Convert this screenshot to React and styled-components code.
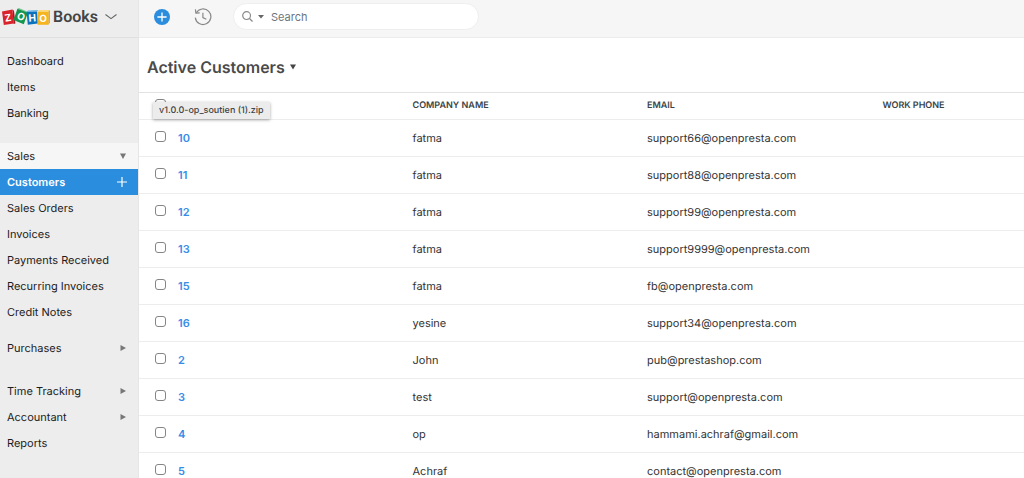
import React from 'react';
import styled, { createGlobalStyle } from 'styled-components';

const openGroup = [
  { label: 'Customers', active: true },
  { label: 'Sales Orders' },
  { label: 'Invoices' },
  { label: 'Payments Received' },
  { label: 'Recurring Invoices' },
  { label: 'Credit Notes' },
];

const customers = [
  { name: '10', company: 'fatma', email: 'support66@openpresta.com' },
  { name: '11', company: 'fatma', email: 'support88@openpresta.com' },
  { name: '12', company: 'fatma', email: 'support99@openpresta.com' },
  { name: '13', company: 'fatma', email: 'support9999@openpresta.com' },
  { name: '15', company: 'fatma', email: 'fb@openpresta.com' },
  { name: '16', company: 'yesine', email: 'support34@openpresta.com' },
  { name: '2', company: 'John', email: 'pub@prestashop.com' },
  { name: '3', company: 'test', email: 'support@openpresta.com' },
  { name: '4', company: 'op', email: 'hammami.achraf@gmail.com' },
  { name: '5', company: 'Achraf', email: 'contact@openpresta.com' },
];

const ZohoLogo = () => (
  <svg width="48" height="18" viewBox="0 0 48 18" aria-hidden="true">
    <path d="M10.4 1.6l1.6 1.2 1.4 12.8-1.8.4z" fill="#a8141f" />
    <path d="M0 3.4l10.4-1.8 1.4 14L1.8 17z" fill="#d8232d" />
    <path d="M15.4.8l1.4-.8 9.8 4-.8 1.4z" fill="#7cc79a" />
    <path d="M15.4.8l10.4 4-4 11.4L11.4 12z" fill="#15954d" />
    <path d="M24.6 4l1.2-1.4 10.4-.6-1.2 1.4z" fill="#6db4e6" />
    <path d="M24.6 4l10.4-.6.8 12.2-10 1.2z" fill="#0b73bd" />
    <path d="M35.6 3.8L37 2h10.8l-1.4 1.8z" fill="#fbd873" />
    <path d="M46.4 3.8L47.8 2v12.8l-1.4 2z" fill="#d99a12" />
    <path d="M35.6 3.8h10.8v13H35.6z" fill="#f6b51e" />
    <LogoLetter x="6" y="13.4" transform="rotate(-9 6 10)">Z</LogoLetter>
    <LogoLetter x="18.8" y="12" transform="rotate(20 18.8 9)">O</LogoLetter>
    <LogoLetter x="30.2" y="13.6" transform="rotate(-4 30 10)">H</LogoLetter>
    <LogoLetter x="41" y="13.8">O</LogoLetter>
  </svg>
);

const Arrow = ({ down }) => (
  <svg width="8" height="8" viewBox="0 0 8 8" fill="#777" aria-hidden="true">
    <path d={down ? 'M1 1.5h6L4 7z' : 'M1.5 1L7 4 1.5 7z'} />
  </svg>
);

const App = () => (
  <>
    <GlobalStyle />
    <Page>
      <Sidebar>
        <Brand>
          <ZohoLogo />
          <BrandName>Books</BrandName>
          <BrandToggle aria-label="Switch app">
            <svg width="14" height="8" viewBox="0 0 14 8" fill="none" stroke="#666" strokeWidth="1.1">
              <path d="M1.5 1.5L7 5.6l5.5-4.1" />
            </svg>
          </BrandToggle>
        </Brand>
        <Nav>
          <NavGroup>
            <NavItem href="#dashboard">Dashboard</NavItem>
            <NavItem href="#items">Items</NavItem>
            <NavItem href="#banking">Banking</NavItem>
          </NavGroup>
          <NavGroup>
            <NavItem href="#sales" $open>
              Sales
              <Arrow down />
            </NavItem>
            {openGroup.map((item) => (
              <NavItem key={item.label} href="#sales" $active={item.active}>
                {item.label}
                {item.active && (
                  <svg width="10" height="10" viewBox="0 0 10 10" stroke="#fff" strokeWidth="1.2" aria-hidden="true">
                    <path d="M5 0v10M0 5h10" />
                  </svg>
                )}
              </NavItem>
            ))}
          </NavGroup>
          <NavGroup>
            <NavItem href="#purchases">
              Purchases
              <Arrow />
            </NavItem>
          </NavGroup>
          <NavGroup>
            <NavItem href="#time">
              Time Tracking
              <Arrow />
            </NavItem>
            <NavItem href="#accountant">
              Accountant
              <Arrow />
            </NavItem>
            <NavItem href="#reports">Reports</NavItem>
          </NavGroup>
        </Nav>
      </Sidebar>
      <Main>
        <TopBar>
          <IconButton aria-label="Quick create">
            <svg width="16" height="16" viewBox="0 0 16 16">
              <circle cx="8" cy="8" r="8" fill="#2b8ddd" />
              <path d="M8 3.4v9.2M3.4 8h9.2" stroke="#fff" strokeWidth="1.3" />
            </svg>
          </IconButton>
          <IconButton aria-label="Recent activity">
            <svg width="18" height="18" viewBox="0 0 18 18" fill="none" stroke="#888" strokeWidth="1.2">
              <path d="M2.2 5A7.8 7.8 0 1 1 1.3 9.6" />
              <path d="M1.4 1.4l.5 3.8 3.8-.4" />
              <path d="M8.9 4.8v4.8l3.4 1.6" />
            </svg>
          </IconButton>
          <SearchBox>
            <svg width="11" height="11" viewBox="0 0 11 11" fill="none" stroke="#888" strokeWidth="1.2" aria-hidden="true">
              <circle cx="4.6" cy="4.6" r="3.9" />
              <path d="M7.5 7.5l3 3" />
            </svg>
            <svg width="6" height="4" viewBox="0 0 6 4" fill="#666" aria-hidden="true">
              <path d="M0 0h6L3 3.4z" />
            </svg>
            <SearchInput type="text" placeholder="Search" aria-label="Search" />
          </SearchBox>
        </TopBar>
        <Heading>
          <Title>Active Customers</Title>
          <IconButton aria-label="Change view">
            <svg width="6" height="6" viewBox="0 0 6 6" fill="#444">
              <path d="M0 .5h6L3 5.5z" />
            </svg>
          </IconButton>
        </Heading>
        <Table>
          <thead>
            <tr>
              <HeadCell $width="39px">
                <Tick type="checkbox" aria-label="Select all" />
                <Tooltip role="tooltip">v1.0.0-op_soutien (1).zip</Tooltip>
              </HeadCell>
              <HeadCell $width="26.5%" />
              <HeadCell $width="26.5%">COMPANY NAME</HeadCell>
              <HeadCell $width="26.6%">EMAIL</HeadCell>
              <HeadCell>WORK PHONE</HeadCell>
            </tr>
          </thead>
          <tbody>
            {customers.map((customer) => (
              <tr key={customer.name}>
                <Cell>
                  <Tick type="checkbox" aria-label={`Select ${customer.name}`} />
                </Cell>
                <Cell>
                  <CustomerLink href="#customer">{customer.name}</CustomerLink>
                </Cell>
                <Cell>{customer.company}</Cell>
                <Cell>{customer.email}</Cell>
                <Cell />
              </tr>
            ))}
          </tbody>
        </Table>
      </Main>
    </Page>
  </>
);

const GlobalStyle = createGlobalStyle`
  * {
    box-sizing: border-box;
  }

  body {
    margin: 0;
    background: #fff;
    color: #222;
    font-family: Inter, 'Liberation Sans', sans-serif;
    font-size: 11px;
    text-rendering: geometricPrecision;
  }
`;

const Page = styled.div`
  display: flex;
  height: 100vh;
  overflow: hidden;
`;

const Sidebar = styled.aside`
  flex: 0 0 139px;
  background: #ededed;
  border-right: 1px solid #e6e6e6;
`;

const Brand = styled.div`
  display: flex;
  align-items: center;
  height: 38px;
  padding: 0 2px 4px;
  border-bottom: 1px solid #e0e0e0;
`;

const LogoLetter = styled.text`
  fill: #fff;
  font-family: Inter, sans-serif;
  font-size: 10px;
  font-weight: 700;
  text-anchor: middle;
`;

const BrandName = styled.span`
  margin-left: 3px;
  color: #444;
  font-family: Roboto, sans-serif;
  font-size: 16px;
  font-weight: 600;
`;

const BrandToggle = styled.button`
  display: flex;
  margin-left: 6px;
  padding: 0;
  border: 0;
  background: none;
`;

const Nav = styled.nav`
  display: flex;
  flex-direction: column;
  padding-top: 10px;
`;

const NavGroup = styled.div`
  margin-bottom: 17px;

  &:nth-child(2) {
    margin-bottom: 10px;
  }
`;

const NavItem = styled.a`
  display: flex;
  align-items: center;
  justify-content: space-between;
  height: 26px;
  padding: 0 11px 0 7px;
  background: ${({ $active, $open }) => ($active ? '#2b8ddd' : $open ? '#f6f6f6' : 'none')};
  color: ${({ $active }) => ($active ? '#fff' : '#1c1c1c')};
  font-weight: ${({ $active }) => ($active ? 600 : 400)};
  text-decoration: none;
`;

const Main = styled.main`
  flex: 1;
  min-width: 0;
`;

const TopBar = styled.header`
  display: flex;
  align-items: center;
  gap: 24px;
  height: 38px;
  padding: 0 15px 4px;
  background: #f6f6f6;
  border-bottom: 1px solid #ececec;
`;

const IconButton = styled.button`
  display: flex;
  padding: 0;
  border: 0;
  background: none;
`;

const SearchBox = styled.label`
  display: flex;
  align-items: center;
  gap: 5px;
  width: 246px;
  height: 27px;
  margin-left: -3px;
  padding: 0 8px;
  background: #fff;
  border: 1px solid #eee;
  border-radius: 14px;
`;

const SearchInput = styled.input`
  flex: 1;
  min-width: 0;
  padding: 0 2px;
  border: 0;
  outline: 0;
  background: none;
  font: inherit;

  &::placeholder {
    color: #6c757d;
    opacity: 1;
  }
`;

const Heading = styled.div`
  display: flex;
  align-items: center;
  gap: 5px;
  height: 54px;
  padding: 4px 8px 0;
`;

const Title = styled.h1`
  margin: 0;
  color: #4a4a4a;
  font-size: 16px;
  font-weight: 600;
`;

const Table = styled.table`
  width: 100%;
  table-layout: fixed;
  border-spacing: 0;
`;

const HeadCell = styled.th`
  position: relative;
  width: ${({ $width }) => $width || 'auto'};
  height: 28px;
  padding: 0 0 1px;
  border-top: 1px solid #e2e2e2;
  border-bottom: 1px solid #ededed;
  color: #3a4448;
  font-size: 9px;
  font-weight: 600;
  text-align: left;
`;

const Cell = styled.td`
  height: 37px;
  padding: 0;
  border-bottom: 1px solid #ededed;
  color: #333;
`;

const Tick = styled.input`
  display: block;
  appearance: none;
  width: 11px;
  height: 11px;
  margin: 0 0 3px 16px;
  background: #fff;
  border: 1px solid #858585;
  border-radius: 3px;

  &:checked {
    background: #2b8ddd;
  }
`;

const Tooltip = styled.span`
  position: absolute;
  z-index: 1;
  top: 9px;
  left: 14px;
  padding: 0 6px;
  background: #ececec;
  box-shadow: 0 1px 3px rgba(0, 0, 0, 0.35);
  color: #444;
  font-size: 9px;
  font-weight: 500;
  line-height: 17px;
  white-space: nowrap;
`;

const CustomerLink = styled.a`
  color: #368ce8;
  font-weight: 600;
  text-decoration: none;
`;

export default App;
